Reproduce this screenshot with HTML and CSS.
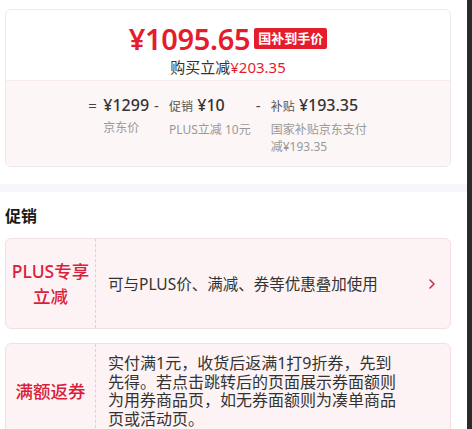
FILE: index.html
```html
<!DOCTYPE html>
<html lang="zh-CN">
<head>
  <meta charset="UTF-8" />
  <meta name="viewport" content="width=device-width, initial-scale=1.0" />
  <title>价格与促销</title>
  <link rel="stylesheet" href="styles.css">
</head>
<body>
  <div class="page">
    <section class="price-card">
      <div class="price-top">
        <div class="price-main">
          <span class="price-big">¥1095.65</span>
          <span class="tag">国补到手价</span>
        </div>
        <div class="price-save">购买立减<em>¥203.35</em></div>
      </div>
      <div class="price-calc">
        <div class="calc-item">
          <span class="op">=</span>
          <div>
            <div class="calc-val">¥1299</div>
            <div class="calc-desc">京东价</div>
          </div>
        </div>
        <div class="calc-item">
          <span class="op">-</span>
          <div>
            <div class="calc-val"><small>促销</small> ¥10</div>
            <div class="calc-desc">PLUS立减 10元</div>
          </div>
        </div>
        <div class="calc-item">
          <span class="op">-</span>
          <div>
            <div class="calc-val"><small>补贴</small> ¥193.35</div>
            <div class="calc-desc narrow">国家补贴京东支付减¥193.35</div>
          </div>
        </div>
      </div>
    </section>

    <div class="band"></div>

    <h2 class="promo-title">促销</h2>

    <div class="promo">
      <div class="promo-name">PLUS专享<br>立减</div>
      <div class="promo-text">可与PLUS价、满减、券等优惠叠加使用</div>
      <svg class="chevron" width="8" height="12" viewBox="0 0 8 12">
        <path d="M2 2 L6 6 L2 10" fill="none" stroke="#c8344a" stroke-width="1.6" stroke-linecap="round" stroke-linejoin="round"/>
      </svg>
    </div>

    <div class="promo">
      <div class="promo-name">满额返券</div>
      <div class="promo-text long">实付满1元，收货后返满1打9折券，先到先得。若点击跳转后的页面展示券面额则为用券商品页，如无券面额则为凑单商品页或活动页。</div>
    </div>
  </div>
</body>
</html>
```

FILE: styles.css
```css
html {
  background: #2a2a2a;
}
body {
  margin: 0;
  font-family: "Noto Sans", "Noto Sans CJK SC", sans-serif;
  color: #333;
}
.page {
  width: 467px;
  min-height: 429px;
  background: #fff;
  padding: 9px 0 0;
  box-sizing: border-box;
  overflow: hidden;
}
.price-card {
  margin: 0 16px 0 5px;
  border: 1px solid #f0e9e9;
  border-radius: 6px;
  overflow: hidden;
}
.price-top {
  padding: 11px 0 3px;
  text-align: center;
  border-bottom: 1px solid #f8eaea;
}
.price-main {
  display: flex;
  justify-content: center;
  align-items: center;
  height: 34px;
}
.price-big {
  font-size: 29px;
  font-weight: 600;
  color: #e51c2c;
  letter-spacing: -0.3px;
}
.tag {
  margin-left: 4px;
  padding: 0 4px;
  height: 21px;
  line-height: 21px;
  background: #e51c2c;
  color: #fff;
  font-size: 13px;
  font-weight: 700;
  border-radius: 2px;
}
.price-save {
  margin-top: 2px;
  font-size: 15px;
  line-height: 20px;
  color: #333;
}
.price-save em {
  font-style: normal;
  color: #e51c2c;
}
.price-calc {
  display: flex;
  justify-content: center;
  gap: 5px;
  padding: 13px 0 11px;
  background: #fdf6f6;
}
.calc-item {
  display: flex;
  align-items: flex-start;
}
.op {
  width: 15px;
  font-size: 15px;
  line-height: 22px;
  color: #444;
}
.calc-val {
  font-size: 16px;
  font-weight: 500;
  line-height: 22px;
  color: #333;
  white-space: nowrap;
}
.calc-val small {
  font-size: 12px;
  font-weight: 400;
  color: #555;
}
.calc-desc {
  margin-top: 3px;
  font-size: 12px;
  line-height: 17px;
  color: #999;
  white-space: nowrap;
}
.calc-desc.narrow {
  width: 97px;
  white-space: normal;
  word-break: break-all;
}
.band {
  height: 8px;
  margin-top: 17px;
  background: #f6f7fa;
}
.promo-title {
  margin: 13px 0 11px 5px;
  font-size: 16px;
  line-height: 22px;
  font-weight: 700;
  color: #1a1a1a;
}
.promo {
  display: flex;
  align-items: center;
  margin: 0 16px 14px 5px;
  min-height: 89px;
  background: #fdf3f4;
  border: 1px solid #f3dfe2;
  border-radius: 6px;
}
.promo-name {
  align-self: stretch;
  display: flex;
  align-items: center;
  justify-content: center;
  width: 89px;
  flex-shrink: 0;
  border-right: 1px dashed #efc9cf;
  font-size: 17.5px;
  font-weight: 500;
  line-height: 25px;
  color: #d9203b;
  text-align: center;
}
.promo-text {
  flex: 1;
  padding: 0 12px;
  font-size: 15.5px;
  line-height: 20px;
  color: #333;
}
.promo-text.long {
  flex: none;
  width: 290px;
  padding: 10px 12px;
  font-size: 16px;
  line-height: 18.5px;
}
.chevron {
  margin-right: 14px;
}
```
